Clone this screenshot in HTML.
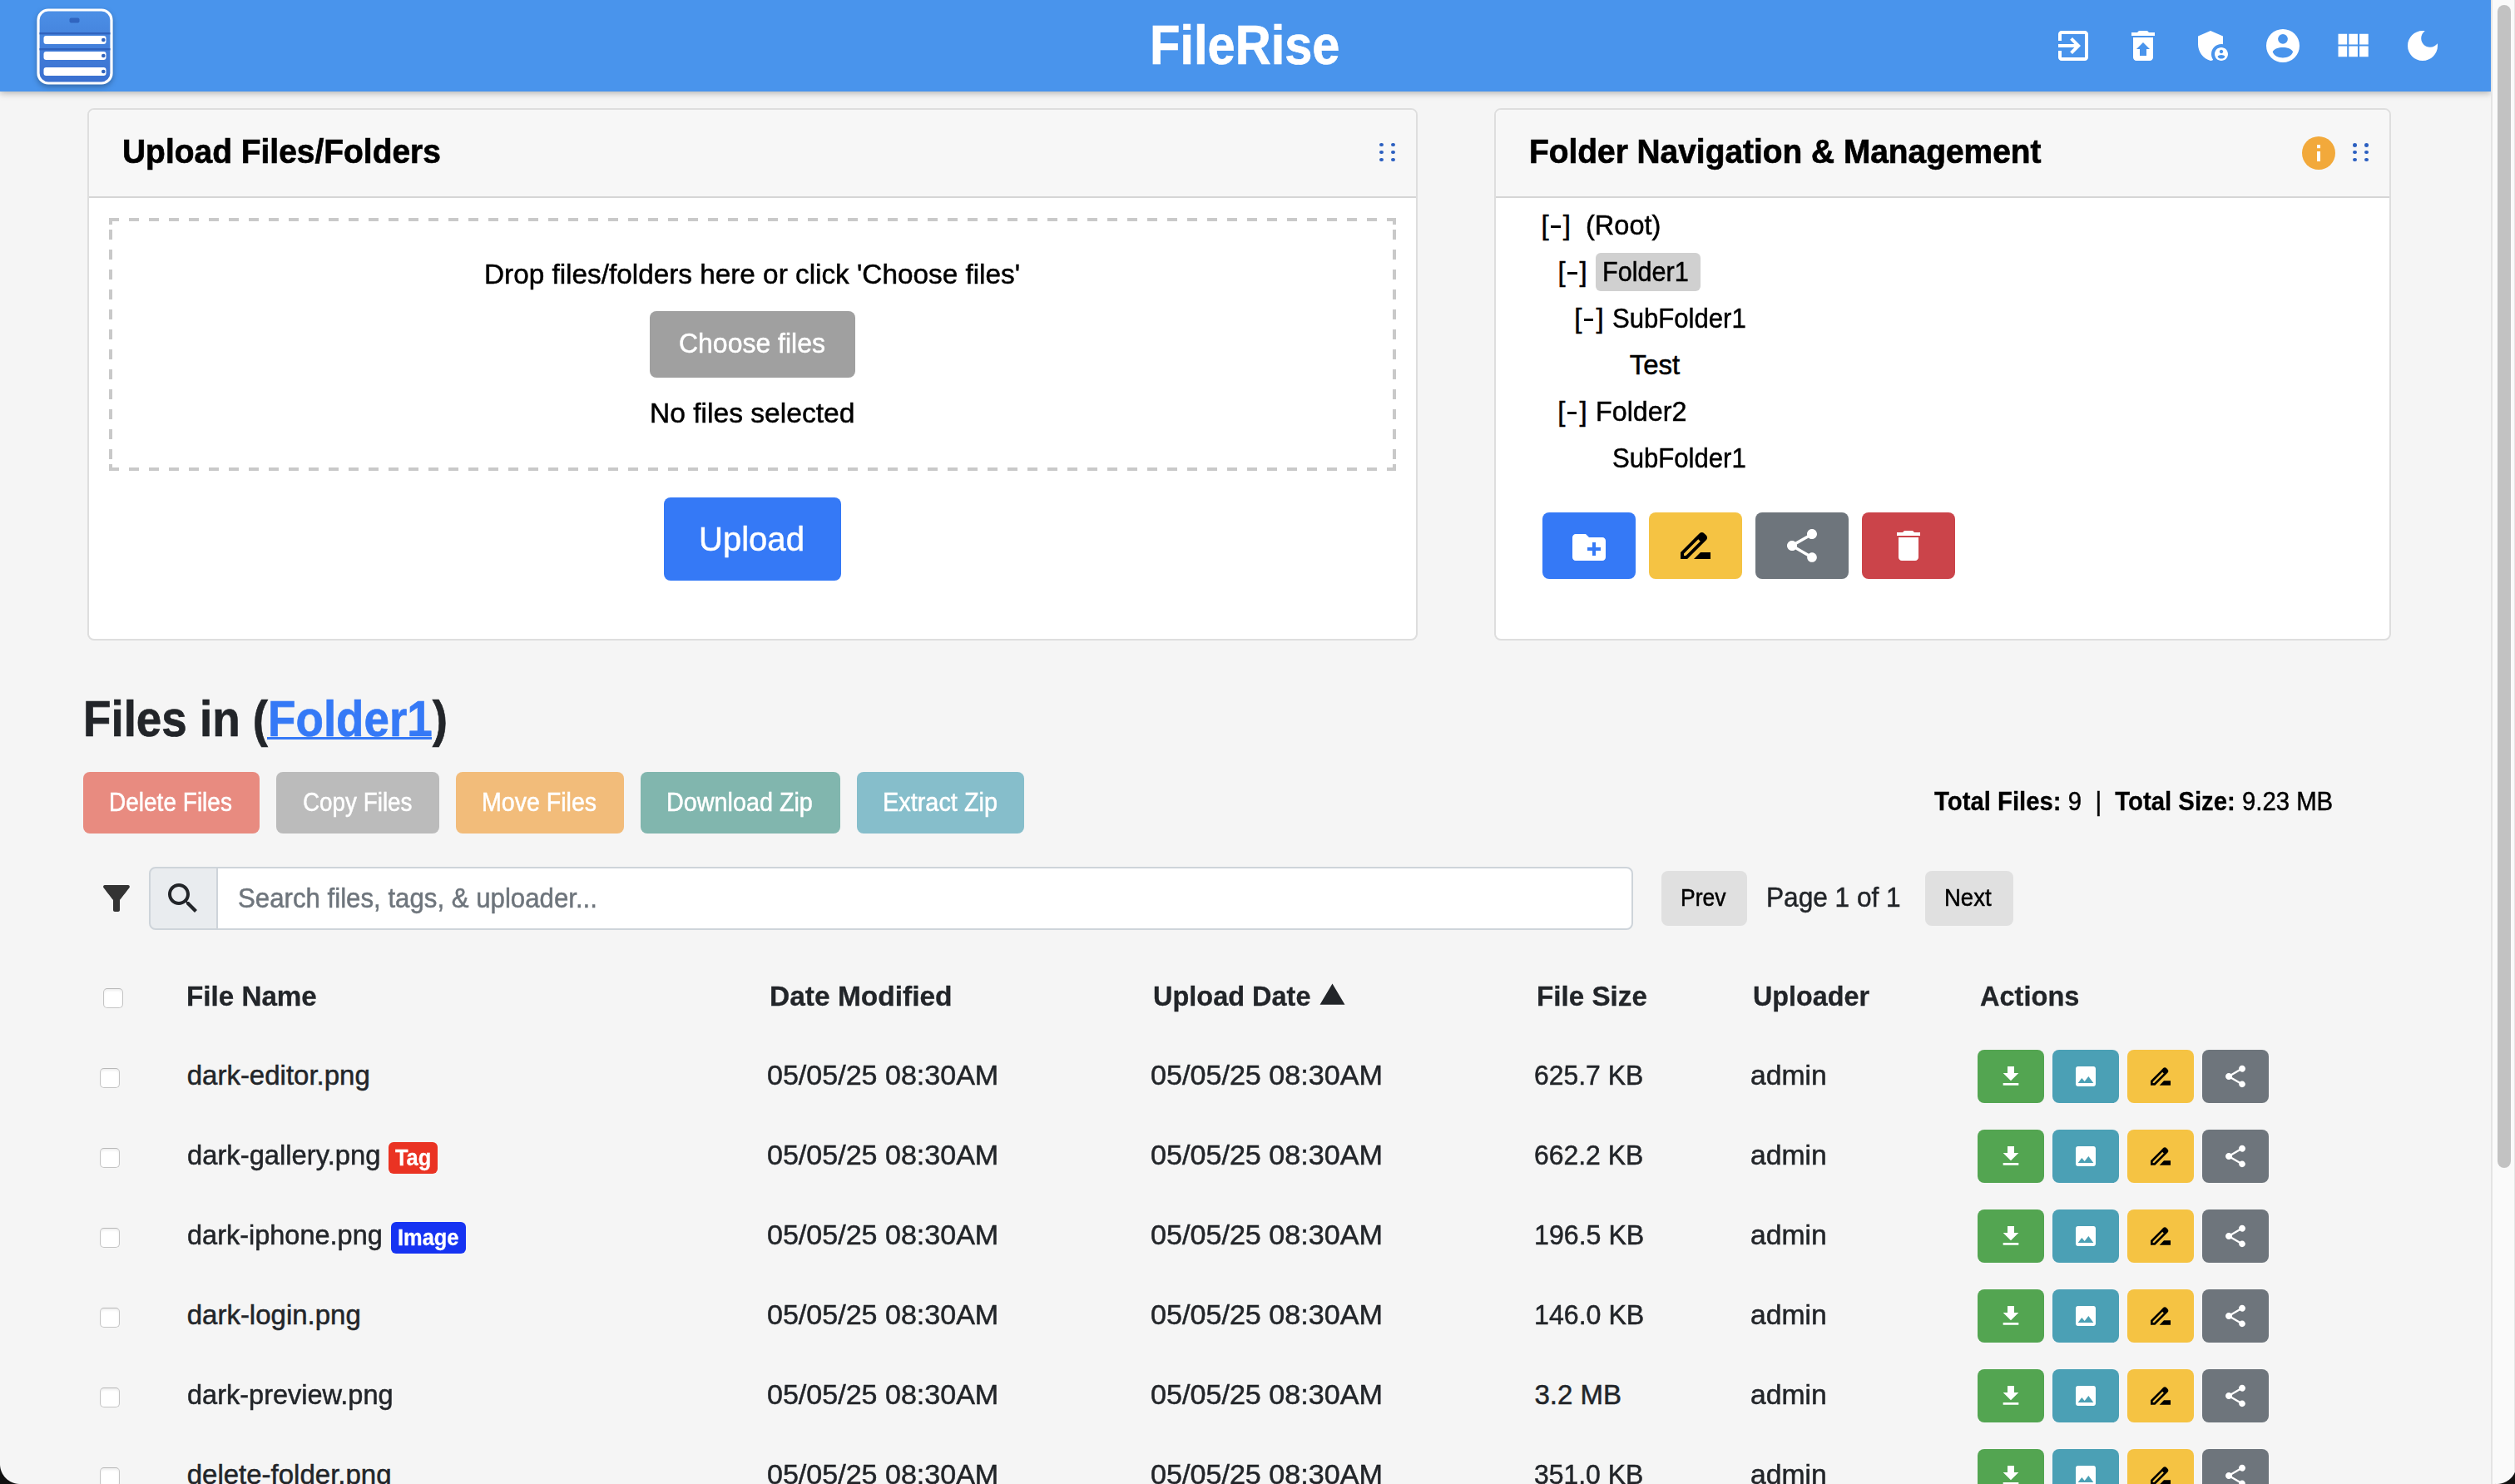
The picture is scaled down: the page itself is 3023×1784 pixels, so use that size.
<!DOCTYPE html>
<html><head><meta charset="utf-8"><title>FileRise</title>
<style>
html,body{margin:0;padding:0;width:3023px;height:1784px;overflow:hidden;background:#f5f5f5;font-family:"Liberation Sans",sans-serif}
.t{position:absolute;line-height:1;white-space:nowrap;transform-origin:0 0;z-index:2;-webkit-text-stroke-width:0.5px}
.t b{-webkit-text-stroke-width:0.3px}
svg{z-index:2}
</style></head><body>
<div style="position:absolute;left:0px;top:0px;width:2994px;height:110px;background:#4994ec;box-shadow:0 2px 8px rgba(0,0,0,.28);z-index:1"></div>
<div style="position:absolute;left:105px;top:130px;width:1599px;height:640px;background:#fff;border:2px solid #dedede;border-radius:8px;box-sizing:border-box;overflow:hidden"></div>
<div style="position:absolute;left:107px;top:132px;width:1595px;height:104px;background:#f7f7f7;border-radius:6px 6px 0 0"></div>
<div style="position:absolute;left:107px;top:236px;width:1595px;height:2px;background:#d5d5d5"></div>
<div style="position:absolute;left:1796px;top:130px;width:1078px;height:640px;background:#fff;border:2px solid #dedede;border-radius:8px;box-sizing:border-box;overflow:hidden"></div>
<div style="position:absolute;left:1798px;top:132px;width:1074px;height:104px;background:#f7f7f7;border-radius:6px 6px 0 0"></div>
<div style="position:absolute;left:1798px;top:236px;width:1074px;height:2px;background:#d5d5d5"></div>
<div style="position:absolute;left:131px;top:262px;width:1547px;height:4px;background:repeating-linear-gradient(90deg,#c9c9c9 0 12px,transparent 12px 24px)"></div>
<div style="position:absolute;left:131px;top:562px;width:1547px;height:4px;background:repeating-linear-gradient(90deg,#c9c9c9 0 12px,transparent 12px 24px)"></div>
<div style="position:absolute;left:131px;top:262px;width:4px;height:304px;background:linear-gradient(#c9c9c9,#c9c9c9) 0 0/4px 8px no-repeat,linear-gradient(#c9c9c9,#c9c9c9) 0 296px/4px 8px no-repeat,repeating-linear-gradient(180deg,#c9c9c9 0 12px,transparent 12px 24px) 0 14px/4px 276px no-repeat"></div>
<div style="position:absolute;left:1674px;top:262px;width:4px;height:304px;background:linear-gradient(#c9c9c9,#c9c9c9) 0 0/4px 8px no-repeat,linear-gradient(#c9c9c9,#c9c9c9) 0 296px/4px 8px no-repeat,repeating-linear-gradient(180deg,#c9c9c9 0 12px,transparent 12px 24px) 0 14px/4px 276px no-repeat"></div>
<div style="position:absolute;left:781px;top:374px;width:247px;height:80px;background:#a0a0a0;border-radius:8px"></div>
<div style="position:absolute;left:798px;top:598px;width:213px;height:100px;background:#3579f6;border-radius:8px"></div>
<div style="position:absolute;left:1918px;top:304px;width:126px;height:46px;background:#d0d0d0;border-radius:6px"></div>
<div style="position:absolute;left:1864px;top:271px;width:12px;height:3px;background:#000"></div>
<div style="position:absolute;left:1884px;top:327px;width:12px;height:3px;background:#000"></div>
<div style="position:absolute;left:1904px;top:383px;width:11px;height:3px;background:#000"></div>
<div style="position:absolute;left:1884px;top:495px;width:11px;height:3px;background:#000"></div>
<div style="position:absolute;left:1854px;top:616px;width:112px;height:80px;background:#3579f6;border-radius:8px"></div>
<div style="position:absolute;left:1982px;top:616px;width:112px;height:80px;background:#f5c343;border-radius:8px"></div>
<div style="position:absolute;left:2110px;top:616px;width:112px;height:80px;background:#6e757c;border-radius:8px"></div>
<div style="position:absolute;left:2238px;top:616px;width:112px;height:80px;background:#cb444a;border-radius:8px"></div>
<div style="position:absolute;left:321px;top:886px;width:198px;height:3px;background:#3579f6;z-index:3"></div>
<div style="position:absolute;left:100px;top:928px;width:212px;height:74px;background:#e88b80;border-radius:8px"></div>
<div style="position:absolute;left:332px;top:928px;width:196px;height:74px;background:#bbbbbb;border-radius:8px"></div>
<div style="position:absolute;left:548px;top:928px;width:202px;height:74px;background:#f2bc7a;border-radius:8px"></div>
<div style="position:absolute;left:770px;top:928px;width:240px;height:74px;background:#81b6ae;border-radius:8px"></div>
<div style="position:absolute;left:1030px;top:928px;width:201px;height:74px;background:#86becb;border-radius:8px"></div>
<div style="position:absolute;left:179px;top:1042px;width:83px;height:76px;background:#e9ecef;border:2px solid #ced4da;border-radius:8px 0 0 8px;box-sizing:border-box"></div>
<div style="position:absolute;left:260px;top:1042px;width:1703px;height:76px;background:#fff;border:2px solid #ced4da;border-radius:0 8px 8px 0;box-sizing:border-box"></div>
<div style="position:absolute;left:1997px;top:1047px;width:103px;height:66px;background:#e0e0e0;border-radius:8px"></div>
<div style="position:absolute;left:2314px;top:1047px;width:106px;height:66px;background:#e0e0e0;border-radius:8px"></div>
<div style="position:absolute;left:124px;top:1188px;width:24px;height:24px;background:#fff;border:1px solid #c4c4c4;border-top-color:#b8b8b8;border-radius:5px;box-sizing:border-box;box-shadow:inset 0 2px 3px rgba(0,0,0,.07)"></div>
<div style="position:absolute;left:120px;top:1284px;width:24px;height:24px;background:#fff;border:1px solid #c4c4c4;border-top-color:#b8b8b8;border-radius:5px;box-sizing:border-box;box-shadow:inset 0 2px 3px rgba(0,0,0,.07)"></div>
<div style="position:absolute;left:2377px;top:1262px;width:80px;height:64px;background:#53a551;border-radius:8px"></div>
<div style="position:absolute;left:2467px;top:1262px;width:80px;height:64px;background:#4ba0b5;border-radius:8px"></div>
<div style="position:absolute;left:2557px;top:1262px;width:80px;height:64px;background:#f5c343;border-radius:8px"></div>
<div style="position:absolute;left:2647px;top:1262px;width:80px;height:64px;background:#6e757c;border-radius:8px"></div>
<div style="position:absolute;left:120px;top:1380px;width:24px;height:24px;background:#fff;border:1px solid #c4c4c4;border-top-color:#b8b8b8;border-radius:5px;box-sizing:border-box;box-shadow:inset 0 2px 3px rgba(0,0,0,.07)"></div>
<div style="position:absolute;left:2377px;top:1358px;width:80px;height:64px;background:#53a551;border-radius:8px"></div>
<div style="position:absolute;left:2467px;top:1358px;width:80px;height:64px;background:#4ba0b5;border-radius:8px"></div>
<div style="position:absolute;left:2557px;top:1358px;width:80px;height:64px;background:#f5c343;border-radius:8px"></div>
<div style="position:absolute;left:2647px;top:1358px;width:80px;height:64px;background:#6e757c;border-radius:8px"></div>
<div style="position:absolute;left:120px;top:1476px;width:24px;height:24px;background:#fff;border:1px solid #c4c4c4;border-top-color:#b8b8b8;border-radius:5px;box-sizing:border-box;box-shadow:inset 0 2px 3px rgba(0,0,0,.07)"></div>
<div style="position:absolute;left:2377px;top:1454px;width:80px;height:64px;background:#53a551;border-radius:8px"></div>
<div style="position:absolute;left:2467px;top:1454px;width:80px;height:64px;background:#4ba0b5;border-radius:8px"></div>
<div style="position:absolute;left:2557px;top:1454px;width:80px;height:64px;background:#f5c343;border-radius:8px"></div>
<div style="position:absolute;left:2647px;top:1454px;width:80px;height:64px;background:#6e757c;border-radius:8px"></div>
<div style="position:absolute;left:120px;top:1572px;width:24px;height:24px;background:#fff;border:1px solid #c4c4c4;border-top-color:#b8b8b8;border-radius:5px;box-sizing:border-box;box-shadow:inset 0 2px 3px rgba(0,0,0,.07)"></div>
<div style="position:absolute;left:2377px;top:1550px;width:80px;height:64px;background:#53a551;border-radius:8px"></div>
<div style="position:absolute;left:2467px;top:1550px;width:80px;height:64px;background:#4ba0b5;border-radius:8px"></div>
<div style="position:absolute;left:2557px;top:1550px;width:80px;height:64px;background:#f5c343;border-radius:8px"></div>
<div style="position:absolute;left:2647px;top:1550px;width:80px;height:64px;background:#6e757c;border-radius:8px"></div>
<div style="position:absolute;left:120px;top:1668px;width:24px;height:24px;background:#fff;border:1px solid #c4c4c4;border-top-color:#b8b8b8;border-radius:5px;box-sizing:border-box;box-shadow:inset 0 2px 3px rgba(0,0,0,.07)"></div>
<div style="position:absolute;left:2377px;top:1646px;width:80px;height:64px;background:#53a551;border-radius:8px"></div>
<div style="position:absolute;left:2467px;top:1646px;width:80px;height:64px;background:#4ba0b5;border-radius:8px"></div>
<div style="position:absolute;left:2557px;top:1646px;width:80px;height:64px;background:#f5c343;border-radius:8px"></div>
<div style="position:absolute;left:2647px;top:1646px;width:80px;height:64px;background:#6e757c;border-radius:8px"></div>
<div style="position:absolute;left:120px;top:1764px;width:24px;height:24px;background:#fff;border:1px solid #c4c4c4;border-top-color:#b8b8b8;border-radius:5px;box-sizing:border-box;box-shadow:inset 0 2px 3px rgba(0,0,0,.07)"></div>
<div style="position:absolute;left:2377px;top:1742px;width:80px;height:64px;background:#53a551;border-radius:8px"></div>
<div style="position:absolute;left:2467px;top:1742px;width:80px;height:64px;background:#4ba0b5;border-radius:8px"></div>
<div style="position:absolute;left:2557px;top:1742px;width:80px;height:64px;background:#f5c343;border-radius:8px"></div>
<div style="position:absolute;left:2647px;top:1742px;width:80px;height:64px;background:#6e757c;border-radius:8px"></div>
<div style="position:absolute;left:467px;top:1373px;width:59px;height:38px;background:#ea3323;border-radius:6px"></div>
<div style="position:absolute;left:470px;top:1469px;width:90px;height:38px;background:#1633f2;border-radius:6px"></div>
<div class="t" style="-webkit-text-stroke-width:0.7px;left:1382.4px;top:21.0px;font-size:66px;font-weight:700;color:#fff;transform:scaleX(0.9028);z-index:2">FileRise</div>
<div class="t" style="-webkit-text-stroke-width:0.7px;left:146.8px;top:162.0px;font-size:41px;font-weight:700;color:#000;transform:scaleX(0.9495);">Upload Files/Folders</div>
<div class="t" style="-webkit-text-stroke-width:0.5px;left:582.0px;top:313.0px;font-size:33px;font-weight:400;color:#000;transform:scaleX(1.0094);">Drop files/folders here or click &#x27;Choose files&#x27;</div>
<div class="t" style="-webkit-text-stroke-width:0.5px;left:816.0px;top:396.0px;font-size:33px;font-weight:400;color:#fff;transform:scaleX(0.9689);">Choose files</div>
<div class="t" style="-webkit-text-stroke-width:0.5px;left:780.6px;top:480.0px;font-size:33px;font-weight:400;color:#000;transform:scaleX(1.0176);">No files selected</div>
<div class="t" style="-webkit-text-stroke-width:0.5px;left:839.6px;top:628.4px;font-size:41px;font-weight:400;color:#fff;transform:scaleX(0.9768);">Upload</div>
<div class="t" style="-webkit-text-stroke-width:0.7px;left:1837.8px;top:162.3px;font-size:41px;font-weight:700;color:#000;transform:scaleX(0.9479);">Folder Navigation &amp; Management</div>
<div class="t" style="-webkit-text-stroke-width:0.5px;left:1852.4px;top:253.8px;font-size:33px;font-weight:400;color:#000;">[</div>
<div class="t" style="-webkit-text-stroke-width:0.5px;left:1878.7px;top:253.8px;font-size:33px;font-weight:400;color:#000;">]</div>
<div class="t" style="-webkit-text-stroke-width:0.5px;left:1905.8px;top:253.8px;font-size:33px;font-weight:400;color:#000;transform:scaleX(0.9852);">(Root)</div>
<div class="t" style="-webkit-text-stroke-width:0.5px;left:1872.4px;top:309.9px;font-size:33px;font-weight:400;color:#000;">[</div>
<div class="t" style="-webkit-text-stroke-width:0.5px;left:1898.5px;top:309.9px;font-size:33px;font-weight:400;color:#000;">]</div>
<div class="t" style="-webkit-text-stroke-width:0.5px;left:1926.1px;top:309.9px;font-size:33px;font-weight:400;color:#000;transform:scaleX(0.9266);">Folder1</div>
<div class="t" style="-webkit-text-stroke-width:0.5px;left:1892.2px;top:366.1px;font-size:33px;font-weight:400;color:#000;">[</div>
<div class="t" style="-webkit-text-stroke-width:0.5px;left:1918.5px;top:366.1px;font-size:33px;font-weight:400;color:#000;">]</div>
<div class="t" style="-webkit-text-stroke-width:0.5px;left:1937.8px;top:366.1px;font-size:33px;font-weight:400;color:#000;transform:scaleX(0.9423);">SubFolder1</div>
<div class="t" style="-webkit-text-stroke-width:0.5px;left:1958.7px;top:421.7px;font-size:33px;font-weight:400;color:#000;">Test</div>
<div class="t" style="-webkit-text-stroke-width:0.5px;left:1872.2px;top:478.0px;font-size:33px;font-weight:400;color:#000;">[</div>
<div class="t" style="-webkit-text-stroke-width:0.5px;left:1898.5px;top:478.0px;font-size:33px;font-weight:400;color:#000;">]</div>
<div class="t" style="-webkit-text-stroke-width:0.5px;left:1918.1px;top:478.0px;font-size:33px;font-weight:400;color:#000;transform:scaleX(0.9771);">Folder2</div>
<div class="t" style="-webkit-text-stroke-width:0.5px;left:1937.8px;top:533.6px;font-size:33px;font-weight:400;color:#000;transform:scaleX(0.9423);">SubFolder1</div>
<div class="t" style="-webkit-text-stroke-width:0.7px;left:99.8px;top:833.6px;font-size:61px;font-weight:700;color:#222529;transform:scaleX(0.8973);">Files in (<span style="color:#3579f6">Folder1</span>)</div>
<div class="t" style="-webkit-text-stroke-width:0.5px;left:131.3px;top:948.5px;font-size:31px;font-weight:400;color:#fff;transform:scaleX(0.9037);">Delete Files</div>
<div class="t" style="-webkit-text-stroke-width:0.5px;left:364.1px;top:948.5px;font-size:31px;font-weight:400;color:#fff;transform:scaleX(0.8979);">Copy Files</div>
<div class="t" style="-webkit-text-stroke-width:0.5px;left:579.1px;top:948.5px;font-size:31px;font-weight:400;color:#fff;transform:scaleX(0.9218);">Move Files</div>
<div class="t" style="-webkit-text-stroke-width:0.5px;left:801.4px;top:948.5px;font-size:31px;font-weight:400;color:#fff;transform:scaleX(0.9278);">Download Zip</div>
<div class="t" style="-webkit-text-stroke-width:0.5px;left:1060.8px;top:948.5px;font-size:31px;font-weight:400;color:#fff;transform:scaleX(0.9317);">Extract Zip</div>
<div class="t" style="-webkit-text-stroke-width:0.5px;left:2324.7px;top:948.4px;font-size:31px;font-weight:400;color:#000;transform:scaleX(0.9461);"><b>Total Files:</b> 9 &nbsp;|&nbsp; <b>Total Size:</b> 9.23 MB</div>
<div class="t" style="-webkit-text-stroke-width:0.5px;left:286.1px;top:1062.5px;font-size:33px;font-weight:400;color:#6e757c;transform:scaleX(0.9457);">Search files, tags, &amp; uploader...</div>
<div class="t" style="-webkit-text-stroke-width:0.5px;left:2020.2px;top:1065.0px;font-size:29px;font-weight:400;color:#000;transform:scaleX(0.9138);">Prev</div>
<div class="t" style="-webkit-text-stroke-width:0.5px;left:2123.1px;top:1061.7px;font-size:33px;font-weight:400;color:#222529;transform:scaleX(0.9578);">Page 1 of 1</div>
<div class="t" style="-webkit-text-stroke-width:0.5px;left:2337.1px;top:1065.0px;font-size:29px;font-weight:400;color:#000;transform:scaleX(0.9483);">Next</div>
<div class="t" style="-webkit-text-stroke-width:0.3px;left:223.8px;top:1180.8px;font-size:33px;font-weight:700;color:#222529;transform:scaleX(1.0059);">File Name</div>
<div class="t" style="-webkit-text-stroke-width:0.3px;left:924.8px;top:1180.8px;font-size:33px;font-weight:700;color:#222529;transform:scaleX(1.0150);">Date Modified</div>
<div class="t" style="-webkit-text-stroke-width:0.3px;left:1386.0px;top:1180.8px;font-size:33px;font-weight:700;color:#222529;transform:scaleX(0.9842);">Upload Date</div>
<div class="t" style="-webkit-text-stroke-width:0.3px;left:1847.0px;top:1180.8px;font-size:33px;font-weight:700;color:#222529;transform:scaleX(1.0062);">File Size</div>
<div class="t" style="-webkit-text-stroke-width:0.3px;left:2107.0px;top:1180.8px;font-size:33px;font-weight:700;color:#222529;transform:scaleX(0.9787);">Uploader</div>
<div class="t" style="-webkit-text-stroke-width:0.3px;left:2380.0px;top:1180.8px;font-size:33px;font-weight:700;color:#222529;transform:scaleX(0.9866);">Actions</div>
<div class="t" style="-webkit-text-stroke-width:0.5px;left:224.7px;top:1275.9px;font-size:33px;font-weight:400;color:#222529;">dark-editor.png</div>
<div class="t" style="-webkit-text-stroke-width:0.5px;left:922.0px;top:1275.9px;font-size:33px;font-weight:400;color:#222529;transform:scaleX(1.0316);">05/05/25 08:30AM</div>
<div class="t" style="-webkit-text-stroke-width:0.5px;left:1382.5px;top:1275.9px;font-size:33px;font-weight:400;color:#222529;transform:scaleX(1.0342);">05/05/25 08:30AM</div>
<div class="t" style="-webkit-text-stroke-width:0.5px;left:1844.4px;top:1275.9px;font-size:33px;font-weight:400;color:#222529;transform:scaleX(0.9669);">625.7 KB</div>
<div class="t" style="-webkit-text-stroke-width:0.5px;left:2104.0px;top:1275.9px;font-size:33px;font-weight:400;color:#222529;transform:scaleX(1.0207);">admin</div>
<div class="t" style="-webkit-text-stroke-width:0.5px;left:224.7px;top:1371.9px;font-size:33px;font-weight:400;color:#222529;transform:scaleX(0.9926);">dark-gallery.png</div>
<div class="t" style="-webkit-text-stroke-width:0.5px;left:922.0px;top:1371.9px;font-size:33px;font-weight:400;color:#222529;transform:scaleX(1.0316);">05/05/25 08:30AM</div>
<div class="t" style="-webkit-text-stroke-width:0.5px;left:1382.5px;top:1371.9px;font-size:33px;font-weight:400;color:#222529;transform:scaleX(1.0342);">05/05/25 08:30AM</div>
<div class="t" style="-webkit-text-stroke-width:0.5px;left:1844.4px;top:1371.9px;font-size:33px;font-weight:400;color:#222529;transform:scaleX(0.9669);">662.2 KB</div>
<div class="t" style="-webkit-text-stroke-width:0.5px;left:2104.0px;top:1371.9px;font-size:33px;font-weight:400;color:#222529;transform:scaleX(1.0207);">admin</div>
<div class="t" style="-webkit-text-stroke-width:0.5px;left:224.7px;top:1467.9px;font-size:33px;font-weight:400;color:#222529;transform:scaleX(0.9843);">dark-iphone.png</div>
<div class="t" style="-webkit-text-stroke-width:0.5px;left:922.0px;top:1467.9px;font-size:33px;font-weight:400;color:#222529;transform:scaleX(1.0316);">05/05/25 08:30AM</div>
<div class="t" style="-webkit-text-stroke-width:0.5px;left:1382.5px;top:1467.9px;font-size:33px;font-weight:400;color:#222529;transform:scaleX(1.0342);">05/05/25 08:30AM</div>
<div class="t" style="-webkit-text-stroke-width:0.5px;left:1843.5px;top:1467.9px;font-size:33px;font-weight:400;color:#222529;transform:scaleX(0.9742);">196.5 KB</div>
<div class="t" style="-webkit-text-stroke-width:0.5px;left:2104.0px;top:1467.9px;font-size:33px;font-weight:400;color:#222529;transform:scaleX(1.0207);">admin</div>
<div class="t" style="-webkit-text-stroke-width:0.5px;left:224.7px;top:1563.9px;font-size:33px;font-weight:400;color:#222529;">dark-login.png</div>
<div class="t" style="-webkit-text-stroke-width:0.5px;left:922.0px;top:1563.9px;font-size:33px;font-weight:400;color:#222529;transform:scaleX(1.0316);">05/05/25 08:30AM</div>
<div class="t" style="-webkit-text-stroke-width:0.5px;left:1382.5px;top:1563.9px;font-size:33px;font-weight:400;color:#222529;transform:scaleX(1.0342);">05/05/25 08:30AM</div>
<div class="t" style="-webkit-text-stroke-width:0.5px;left:1843.5px;top:1563.9px;font-size:33px;font-weight:400;color:#222529;transform:scaleX(0.9742);">146.0 KB</div>
<div class="t" style="-webkit-text-stroke-width:0.5px;left:2104.0px;top:1563.9px;font-size:33px;font-weight:400;color:#222529;transform:scaleX(1.0207);">admin</div>
<div class="t" style="-webkit-text-stroke-width:0.5px;left:224.7px;top:1659.9px;font-size:33px;font-weight:400;color:#222529;transform:scaleX(0.9851);">dark-preview.png</div>
<div class="t" style="-webkit-text-stroke-width:0.5px;left:922.0px;top:1659.9px;font-size:33px;font-weight:400;color:#222529;transform:scaleX(1.0316);">05/05/25 08:30AM</div>
<div class="t" style="-webkit-text-stroke-width:0.5px;left:1382.5px;top:1659.9px;font-size:33px;font-weight:400;color:#222529;transform:scaleX(1.0342);">05/05/25 08:30AM</div>
<div class="t" style="-webkit-text-stroke-width:0.5px;left:1844.4px;top:1659.9px;font-size:33px;font-weight:400;color:#222529;">3.2 MB</div>
<div class="t" style="-webkit-text-stroke-width:0.5px;left:2104.0px;top:1659.9px;font-size:33px;font-weight:400;color:#222529;transform:scaleX(1.0207);">admin</div>
<div class="t" style="-webkit-text-stroke-width:0.5px;left:224.7px;top:1755.9px;font-size:33px;font-weight:400;color:#222529;">delete-folder.png</div>
<div class="t" style="-webkit-text-stroke-width:0.5px;left:922.0px;top:1755.9px;font-size:33px;font-weight:400;color:#222529;transform:scaleX(1.0316);">05/05/25 08:30AM</div>
<div class="t" style="-webkit-text-stroke-width:0.5px;left:1382.5px;top:1755.9px;font-size:33px;font-weight:400;color:#222529;transform:scaleX(1.0342);">05/05/25 08:30AM</div>
<div class="t" style="-webkit-text-stroke-width:0.5px;left:1844.4px;top:1755.9px;font-size:33px;font-weight:400;color:#222529;transform:scaleX(0.9669);">351.0 KB</div>
<div class="t" style="-webkit-text-stroke-width:0.5px;left:2104.0px;top:1755.9px;font-size:33px;font-weight:400;color:#222529;transform:scaleX(1.0207);">admin</div>
<div class="t" style="-webkit-text-stroke-width:0.3px;left:475.0px;top:1379.0px;font-size:27px;font-weight:700;color:#fff;transform:scaleX(0.9400);">Tag</div>
<div class="t" style="-webkit-text-stroke-width:0.3px;left:478.1px;top:1475.2px;font-size:27px;font-weight:700;color:#fff;transform:scaleX(0.9413);">Image</div>
<svg style="position:absolute;left:44px;top:10px;z-index:2;filter:drop-shadow(0 3px 3px rgba(0,0,0,.28))" width="92" height="92" viewBox="0 0 92 92">
<defs><linearGradient id="lg" x1="0" y1="0" x2="0" y2="1"><stop offset="0" stop-color="#4c90e6"/><stop offset="1" stop-color="#3a6fcf"/></linearGradient></defs>
<rect x="2" y="2" width="88" height="88" rx="12" fill="url(#lg)" stroke="#fff" stroke-width="3.2"/>
<rect x="39.5" y="11.5" width="12" height="6" rx="2" fill="#3065c0"/>
<rect x="3.5" y="29" width="85" height="2.4" fill="#3063bd"/>
<rect x="3.5" y="48" width="85" height="2.4" fill="#3063bd"/>
<rect x="8.5" y="33" width="75" height="10" rx="3" fill="#fff"/><circle cx="80.3" cy="38" r="2.3" fill="#3063bd"/>
<rect x="8.5" y="52" width="75" height="10" rx="3" fill="#fff"/><circle cx="80.3" cy="57" r="2.3" fill="#3063bd"/>
<rect x="8.5" y="71" width="75" height="10" rx="3" fill="#fff"/><circle cx="80.3" cy="76" r="2.3" fill="#3063bd"/>
</svg>
<svg style="position:absolute;left:2468px;top:31px" width="48" height="48" viewBox="0 0 24 24" fill="#fff" ><path d="M10.09 15.59L11.5 17l5-5-5-5-1.41 1.41L12.67 11H3v2h9.67l-2.58 2.59zM19 3H5c-1.11 0-2 .9-2 2v4h2V5h14v14H5v-4H3v4c0 1.1.89 2 2 2h14c1.1 0 2-.9 2-2V5c0-1.1-.9-2-2-2z"/></svg>
<svg style="position:absolute;left:2552px;top:31px" width="48" height="48" viewBox="0 0 24 24" fill="#fff" ><path d="M19 4h-3.5l-1-1h-5l-1 1H5v2h14zM6 7v12c0 1.1.9 2 2 2h8c1.1 0 2-.9 2-2V7H6zm8 7v4h-4v-4H8l4-4 4 4h-2z"/></svg>
<svg style="position:absolute;left:2636px;top:31px" width="48" height="48" viewBox="0 0 24 24" fill="#fff" ><path d="M17,11c0.34,0,0.67,0.04,1,0.09V6.27L10.5,3L3,6.27v4.91c0,4.54,3.2,8.79,7.5,9.82c0.55-0.13,1.08-0.32,1.6-0.55C11.41,19.47,11,18.28,11,17C11,13.69,13.69,11,17,11z"/><path d="M17,13c-2.21,0-4,1.79-4,4c0,2.21,1.79,4,4,4s4-1.79,4-4C21,14.79,19.21,13,17,13z M17,14.38c0.62,0,1.12,0.51,1.12,1.12s-0.51,1.12-1.12,1.12s-1.12-0.51-1.12-1.12S16.38,14.38,17,14.38z M17,19.75c-0.93,0-1.74-0.46-2.24-1.17c0.05-0.72,1.51-1.08,2.24-1.08s2.19,0.36,2.24,1.08C18.74,19.29,17.93,19.75,17,19.75z"/></svg>
<svg style="position:absolute;left:2720px;top:31px" width="48" height="48" viewBox="0 0 24 24" fill="#fff" ><path fill-rule="evenodd" d="M12 2a10 10 0 1 0 0 20a10 10 0 1 0 0-20zM12 4.95a2.95 2.95 0 1 0 0 5.9a2.95 2.95 0 1 0 0-5.9zM5.85 15.6C7.5 12.1 16.5 12.1 18.05 15.6C16.5 20.4 7.5 20.4 5.85 15.6z"/></svg>
<svg style="position:absolute;left:2888px;top:31px" width="48" height="48" viewBox="0 0 24 24" fill="#fff" ><path d="M12 3c-4.97 0-9 4.03-9 9s4.03 9 9 9 9-4.03 9-9c0-.46-.04-.92-.1-1.36-.98 1.37-2.58 2.26-4.4 2.26-2.98 0-5.4-2.42-5.4-5.4 0-1.81.89-3.42 2.26-4.4-.44-.06-.9-.1-1.36-.1z"/></svg>
<svg style="position:absolute;left:2801.5px;top:30.4px" width="51.1" height="51.1" viewBox="0 0 24 24" fill="#fff" ><path d="M4 11h5V5H4v6zm0 7h5v-6H4v6zm6 0h5v-6h-5v6zm6 0h5v-6h-5v6zm-6-7h5V5h-5v6zm6-6v6h5V5h-5z"/></svg>
<div style="position:absolute;left:1658.0px;top:171.89999999999998px;width:5.2px;height:4.6px;border-radius:50%;background:#2b5fc0"></div>
<div style="position:absolute;left:1658.0px;top:180.79999999999998px;width:5.2px;height:4.6px;border-radius:50%;background:#2b5fc0"></div>
<div style="position:absolute;left:1658.0px;top:189.7px;width:5.2px;height:4.6px;border-radius:50%;background:#2b5fc0"></div>
<div style="position:absolute;left:1672.0px;top:171.89999999999998px;width:5.2px;height:4.6px;border-radius:50%;background:#2b5fc0"></div>
<div style="position:absolute;left:1672.0px;top:180.79999999999998px;width:5.2px;height:4.6px;border-radius:50%;background:#2b5fc0"></div>
<div style="position:absolute;left:1672.0px;top:189.7px;width:5.2px;height:4.6px;border-radius:50%;background:#2b5fc0"></div>
<div style="position:absolute;left:2827.6px;top:172.0px;width:5.2px;height:4.6px;border-radius:50%;background:#2b5fc0"></div>
<div style="position:absolute;left:2827.6px;top:180.89999999999998px;width:5.2px;height:4.6px;border-radius:50%;background:#2b5fc0"></div>
<div style="position:absolute;left:2827.6px;top:189.7px;width:5.2px;height:4.6px;border-radius:50%;background:#2b5fc0"></div>
<div style="position:absolute;left:2841.9px;top:172.0px;width:5.2px;height:4.6px;border-radius:50%;background:#2b5fc0"></div>
<div style="position:absolute;left:2841.9px;top:180.89999999999998px;width:5.2px;height:4.6px;border-radius:50%;background:#2b5fc0"></div>
<div style="position:absolute;left:2841.9px;top:189.7px;width:5.2px;height:4.6px;border-radius:50%;background:#2b5fc0"></div>
<svg style="position:absolute;left:2767px;top:164px" width="40" height="40" viewBox="0 0 40 40"><circle cx="20" cy="20" r="20" fill="#f2a93b"/><rect x="18" y="10" width="4" height="4.2" fill="#fff"/><rect x="18" y="18" width="4" height="12" fill="#fff"/></svg>
<svg style="position:absolute;left:1886px;top:634px" width="48" height="48" viewBox="0 0 24 24" fill="#fff" ><path d="M20 6h-8l-2-2H4c-1.11 0-1.99.89-1.99 2L2 18c0 1.11.89 2 2 2h16c1.11 0 2-.89 2-2V8c0-1.11-.89-2-2-2zm-1 8h-3v3h-2v-3h-3v-2h3V9h2v3h3v2z"/></svg>
<svg style="position:absolute;left:2014px;top:632px" width="48" height="48" viewBox="0 0 24 24" fill="#000" ><path d="M18.41 5.8L17.2 4.59c-.78-.78-2.05-.78-2.83 0l-2.68 2.68L3 15.96V20h4.04l8.74-8.74 2.63-2.63c.79-.78.79-2.05 0-2.83zM6.21 18H5v-1.21l8.66-8.66 1.21 1.21L6.21 18zM11 20l4-4h6v4H11z"/></svg>
<svg style="position:absolute;left:2142px;top:632px" width="48" height="48" viewBox="0 0 24 24" fill="#fff" ><path d="M18 16.08c-.76 0-1.44.3-1.96.77L8.91 12.7c.05-.23.09-.46.09-.7s-.04-.47-.09-.7l7.05-4.11c.54.5 1.25.81 2.04.81 1.66 0 3-1.34 3-3s-1.34-3-3-3-3 1.34-3 3c0 .24.04.47.09.7L8.04 9.81C7.5 9.31 6.79 9 6 9c-1.66 0-3 1.34-3 3s1.34 3 3 3c.79 0 1.5-.31 2.04-.81l7.12 4.16c-.05.21-.08.43-.08.65 0 1.61 1.31 2.92 2.92 2.92 1.61 0 2.92-1.31 2.92-2.92s-1.31-2.92-2.92-2.92z"/></svg>
<svg style="position:absolute;left:2270px;top:632px" width="48" height="48" viewBox="0 0 24 24" fill="#fff" ><path d="M6 19c0 1.1.9 2 2 2h8c1.1 0 2-.9 2-2V7H6v12zM19 4h-3.5l-1-1h-5l-1 1H5v2h14V4z"/></svg>
<svg style="position:absolute;left:116px;top:1056px" width="48" height="48" viewBox="0 0 24 24" fill="#333" ><path d="M4.25 5.61C6.27 8.2 10 13 10 13v6c0 .55.45 1 1 1h2c.55 0 1-.45 1-1v-6s3.72-4.8 5.74-7.39c.51-.66.04-1.61-.79-1.61H5.04c-.83 0-1.3.95-.79 1.61z"/></svg>
<svg style="position:absolute;left:196px;top:1055.7px" width="48" height="48" viewBox="0 0 24 24" fill="#222529" ><path d="M15.5 14h-.79l-.28-.27C15.41 12.59 16 11.11 16 9.5 16 5.91 13.09 3 9.5 3S3 5.91 3 9.5 5.91 16 9.5 16c1.61 0 3.09-.59 4.23-1.57l.27.28v.79l5 4.99L20.49 19l-4.99-5zm-6 0C7.01 14 5 11.99 5 9.5S7.01 5 9.5 5 14 7.01 14 9.5 11.99 14 9.5 14z"/></svg>
<svg style="position:absolute;left:1586px;top:1182px" width="31" height="26" viewBox="0 0 31 26"><path d="M15.5 0.5L30.5 25.7H0.5z" fill="#222529"/></svg>
<svg style="position:absolute;left:2401px;top:1278px" width="32" height="32" viewBox="0 0 24 24" fill="#fff" ><path d="M19 9h-4V3H9v6H5l7 7 7-7zM5 18v2h14v-2H5z"/></svg>
<svg style="position:absolute;left:2491px;top:1278px" width="32" height="32" viewBox="0 0 24 24" fill="#fff" ><path d="M21 19V5c0-1.1-.9-2-2-2H5c-1.1 0-2 .9-2 2v14c0 1.1.9 2 2 2h14c1.1 0 2-.9 2-2zM8.5 13.5l2.5 3.01L14.5 12l4.5 6H5l3.5-4.5z"/></svg>
<svg style="position:absolute;left:2581px;top:1278px" width="32" height="32" viewBox="0 0 24 24" fill="#000" ><path d="M18.41 5.8L17.2 4.59c-.78-.78-2.05-.78-2.83 0l-2.68 2.68L3 15.96V20h4.04l8.74-8.74 2.63-2.63c.79-.78.79-2.05 0-2.83zM6.21 18H5v-1.21l8.66-8.66 1.21 1.21L6.21 18zM11 20l4-4h6v4H11z"/></svg>
<svg style="position:absolute;left:2671px;top:1278px" width="32" height="32" viewBox="0 0 24 24" fill="#fff" ><path d="M18 16.08c-.76 0-1.44.3-1.96.77L8.91 12.7c.05-.23.09-.46.09-.7s-.04-.47-.09-.7l7.05-4.11c.54.5 1.25.81 2.04.81 1.66 0 3-1.34 3-3s-1.34-3-3-3-3 1.34-3 3c0 .24.04.47.09.7L8.04 9.81C7.5 9.31 6.79 9 6 9c-1.66 0-3 1.34-3 3s1.34 3 3 3c.79 0 1.5-.31 2.04-.81l7.12 4.16c-.05.21-.08.43-.08.65 0 1.61 1.31 2.92 2.92 2.92 1.61 0 2.92-1.31 2.92-2.92s-1.31-2.92-2.92-2.92z"/></svg>
<svg style="position:absolute;left:2401px;top:1374px" width="32" height="32" viewBox="0 0 24 24" fill="#fff" ><path d="M19 9h-4V3H9v6H5l7 7 7-7zM5 18v2h14v-2H5z"/></svg>
<svg style="position:absolute;left:2491px;top:1374px" width="32" height="32" viewBox="0 0 24 24" fill="#fff" ><path d="M21 19V5c0-1.1-.9-2-2-2H5c-1.1 0-2 .9-2 2v14c0 1.1.9 2 2 2h14c1.1 0 2-.9 2-2zM8.5 13.5l2.5 3.01L14.5 12l4.5 6H5l3.5-4.5z"/></svg>
<svg style="position:absolute;left:2581px;top:1374px" width="32" height="32" viewBox="0 0 24 24" fill="#000" ><path d="M18.41 5.8L17.2 4.59c-.78-.78-2.05-.78-2.83 0l-2.68 2.68L3 15.96V20h4.04l8.74-8.74 2.63-2.63c.79-.78.79-2.05 0-2.83zM6.21 18H5v-1.21l8.66-8.66 1.21 1.21L6.21 18zM11 20l4-4h6v4H11z"/></svg>
<svg style="position:absolute;left:2671px;top:1374px" width="32" height="32" viewBox="0 0 24 24" fill="#fff" ><path d="M18 16.08c-.76 0-1.44.3-1.96.77L8.91 12.7c.05-.23.09-.46.09-.7s-.04-.47-.09-.7l7.05-4.11c.54.5 1.25.81 2.04.81 1.66 0 3-1.34 3-3s-1.34-3-3-3-3 1.34-3 3c0 .24.04.47.09.7L8.04 9.81C7.5 9.31 6.79 9 6 9c-1.66 0-3 1.34-3 3s1.34 3 3 3c.79 0 1.5-.31 2.04-.81l7.12 4.16c-.05.21-.08.43-.08.65 0 1.61 1.31 2.92 2.92 2.92 1.61 0 2.92-1.31 2.92-2.92s-1.31-2.92-2.92-2.92z"/></svg>
<svg style="position:absolute;left:2401px;top:1470px" width="32" height="32" viewBox="0 0 24 24" fill="#fff" ><path d="M19 9h-4V3H9v6H5l7 7 7-7zM5 18v2h14v-2H5z"/></svg>
<svg style="position:absolute;left:2491px;top:1470px" width="32" height="32" viewBox="0 0 24 24" fill="#fff" ><path d="M21 19V5c0-1.1-.9-2-2-2H5c-1.1 0-2 .9-2 2v14c0 1.1.9 2 2 2h14c1.1 0 2-.9 2-2zM8.5 13.5l2.5 3.01L14.5 12l4.5 6H5l3.5-4.5z"/></svg>
<svg style="position:absolute;left:2581px;top:1470px" width="32" height="32" viewBox="0 0 24 24" fill="#000" ><path d="M18.41 5.8L17.2 4.59c-.78-.78-2.05-.78-2.83 0l-2.68 2.68L3 15.96V20h4.04l8.74-8.74 2.63-2.63c.79-.78.79-2.05 0-2.83zM6.21 18H5v-1.21l8.66-8.66 1.21 1.21L6.21 18zM11 20l4-4h6v4H11z"/></svg>
<svg style="position:absolute;left:2671px;top:1470px" width="32" height="32" viewBox="0 0 24 24" fill="#fff" ><path d="M18 16.08c-.76 0-1.44.3-1.96.77L8.91 12.7c.05-.23.09-.46.09-.7s-.04-.47-.09-.7l7.05-4.11c.54.5 1.25.81 2.04.81 1.66 0 3-1.34 3-3s-1.34-3-3-3-3 1.34-3 3c0 .24.04.47.09.7L8.04 9.81C7.5 9.31 6.79 9 6 9c-1.66 0-3 1.34-3 3s1.34 3 3 3c.79 0 1.5-.31 2.04-.81l7.12 4.16c-.05.21-.08.43-.08.65 0 1.61 1.31 2.92 2.92 2.92 1.61 0 2.92-1.31 2.92-2.92s-1.31-2.92-2.92-2.92z"/></svg>
<svg style="position:absolute;left:2401px;top:1566px" width="32" height="32" viewBox="0 0 24 24" fill="#fff" ><path d="M19 9h-4V3H9v6H5l7 7 7-7zM5 18v2h14v-2H5z"/></svg>
<svg style="position:absolute;left:2491px;top:1566px" width="32" height="32" viewBox="0 0 24 24" fill="#fff" ><path d="M21 19V5c0-1.1-.9-2-2-2H5c-1.1 0-2 .9-2 2v14c0 1.1.9 2 2 2h14c1.1 0 2-.9 2-2zM8.5 13.5l2.5 3.01L14.5 12l4.5 6H5l3.5-4.5z"/></svg>
<svg style="position:absolute;left:2581px;top:1566px" width="32" height="32" viewBox="0 0 24 24" fill="#000" ><path d="M18.41 5.8L17.2 4.59c-.78-.78-2.05-.78-2.83 0l-2.68 2.68L3 15.96V20h4.04l8.74-8.74 2.63-2.63c.79-.78.79-2.05 0-2.83zM6.21 18H5v-1.21l8.66-8.66 1.21 1.21L6.21 18zM11 20l4-4h6v4H11z"/></svg>
<svg style="position:absolute;left:2671px;top:1566px" width="32" height="32" viewBox="0 0 24 24" fill="#fff" ><path d="M18 16.08c-.76 0-1.44.3-1.96.77L8.91 12.7c.05-.23.09-.46.09-.7s-.04-.47-.09-.7l7.05-4.11c.54.5 1.25.81 2.04.81 1.66 0 3-1.34 3-3s-1.34-3-3-3-3 1.34-3 3c0 .24.04.47.09.7L8.04 9.81C7.5 9.31 6.79 9 6 9c-1.66 0-3 1.34-3 3s1.34 3 3 3c.79 0 1.5-.31 2.04-.81l7.12 4.16c-.05.21-.08.43-.08.65 0 1.61 1.31 2.92 2.92 2.92 1.61 0 2.92-1.31 2.92-2.92s-1.31-2.92-2.92-2.92z"/></svg>
<svg style="position:absolute;left:2401px;top:1662px" width="32" height="32" viewBox="0 0 24 24" fill="#fff" ><path d="M19 9h-4V3H9v6H5l7 7 7-7zM5 18v2h14v-2H5z"/></svg>
<svg style="position:absolute;left:2491px;top:1662px" width="32" height="32" viewBox="0 0 24 24" fill="#fff" ><path d="M21 19V5c0-1.1-.9-2-2-2H5c-1.1 0-2 .9-2 2v14c0 1.1.9 2 2 2h14c1.1 0 2-.9 2-2zM8.5 13.5l2.5 3.01L14.5 12l4.5 6H5l3.5-4.5z"/></svg>
<svg style="position:absolute;left:2581px;top:1662px" width="32" height="32" viewBox="0 0 24 24" fill="#000" ><path d="M18.41 5.8L17.2 4.59c-.78-.78-2.05-.78-2.83 0l-2.68 2.68L3 15.96V20h4.04l8.74-8.74 2.63-2.63c.79-.78.79-2.05 0-2.83zM6.21 18H5v-1.21l8.66-8.66 1.21 1.21L6.21 18zM11 20l4-4h6v4H11z"/></svg>
<svg style="position:absolute;left:2671px;top:1662px" width="32" height="32" viewBox="0 0 24 24" fill="#fff" ><path d="M18 16.08c-.76 0-1.44.3-1.96.77L8.91 12.7c.05-.23.09-.46.09-.7s-.04-.47-.09-.7l7.05-4.11c.54.5 1.25.81 2.04.81 1.66 0 3-1.34 3-3s-1.34-3-3-3-3 1.34-3 3c0 .24.04.47.09.7L8.04 9.81C7.5 9.31 6.79 9 6 9c-1.66 0-3 1.34-3 3s1.34 3 3 3c.79 0 1.5-.31 2.04-.81l7.12 4.16c-.05.21-.08.43-.08.65 0 1.61 1.31 2.92 2.92 2.92 1.61 0 2.92-1.31 2.92-2.92s-1.31-2.92-2.92-2.92z"/></svg>
<svg style="position:absolute;left:2401px;top:1758px" width="32" height="32" viewBox="0 0 24 24" fill="#fff" ><path d="M19 9h-4V3H9v6H5l7 7 7-7zM5 18v2h14v-2H5z"/></svg>
<svg style="position:absolute;left:2491px;top:1758px" width="32" height="32" viewBox="0 0 24 24" fill="#fff" ><path d="M21 19V5c0-1.1-.9-2-2-2H5c-1.1 0-2 .9-2 2v14c0 1.1.9 2 2 2h14c1.1 0 2-.9 2-2zM8.5 13.5l2.5 3.01L14.5 12l4.5 6H5l3.5-4.5z"/></svg>
<svg style="position:absolute;left:2581px;top:1758px" width="32" height="32" viewBox="0 0 24 24" fill="#000" ><path d="M18.41 5.8L17.2 4.59c-.78-.78-2.05-.78-2.83 0l-2.68 2.68L3 15.96V20h4.04l8.74-8.74 2.63-2.63c.79-.78.79-2.05 0-2.83zM6.21 18H5v-1.21l8.66-8.66 1.21 1.21L6.21 18zM11 20l4-4h6v4H11z"/></svg>
<svg style="position:absolute;left:2671px;top:1758px" width="32" height="32" viewBox="0 0 24 24" fill="#fff" ><path d="M18 16.08c-.76 0-1.44.3-1.96.77L8.91 12.7c.05-.23.09-.46.09-.7s-.04-.47-.09-.7l7.05-4.11c.54.5 1.25.81 2.04.81 1.66 0 3-1.34 3-3s-1.34-3-3-3-3 1.34-3 3c0 .24.04.47.09.7L8.04 9.81C7.5 9.31 6.79 9 6 9c-1.66 0-3 1.34-3 3s1.34 3 3 3c.79 0 1.5-.31 2.04-.81l7.12 4.16c-.05.21-.08.43-.08.65 0 1.61 1.31 2.92 2.92 2.92 1.61 0 2.92-1.31 2.92-2.92s-1.31-2.92-2.92-2.92z"/></svg>
<div style="position:absolute;left:2994px;top:0;width:29px;height:1784px;background:#fafafa;border-left:2px solid #e4e4e4;border-right:1px solid #e6e6e6;box-sizing:border-box;z-index:3"></div>
<div style="position:absolute;left:3002px;top:6px;width:16px;height:1398px;background:#c2c2c2;border-radius:8px;z-index:4"></div>
<div style="position:absolute;left:0;top:1760px;width:24px;height:24px;background:radial-gradient(circle at 24px 0,rgba(0,0,0,0) 23.5px,#111 24.5px);z-index:5"></div>
<div style="position:absolute;left:2999px;top:1760px;width:24px;height:24px;background:radial-gradient(circle at 2px 0,rgba(0,0,0,0) 23.5px,#111 24.5px);z-index:5"></div>
</body></html>
